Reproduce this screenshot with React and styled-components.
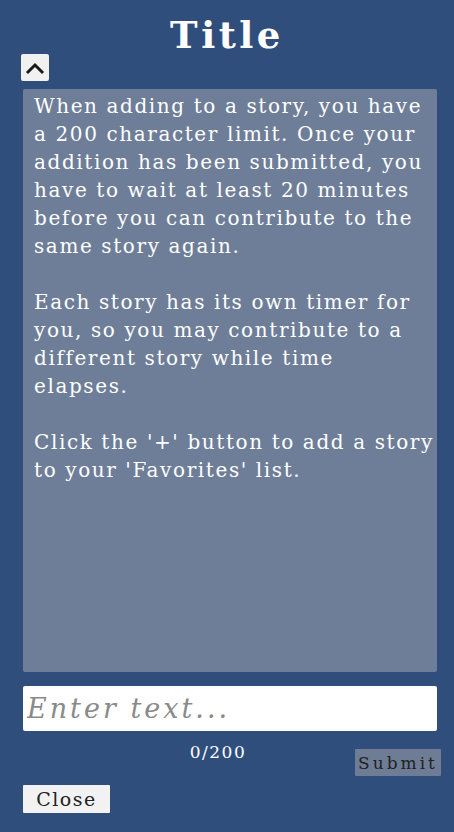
import React from 'react';
import styled, { createGlobalStyle } from 'styled-components';

const GlobalStyle = createGlobalStyle`
  html, body {
    margin: 0;
    padding: 0;
    background: #304e7c;
  }
  body {
    font-family: 'DejaVu Serif', 'Liberation Serif', serif;
  }
`;

const Page = styled.div`
  width: 454px;
  height: 832px;
  box-sizing: border-box;
  padding: 0 15px 0 23px;
  display: flex;
  flex-direction: column;
  background: #304e7c;
  overflow: hidden;
`;

const Title = styled.h1`
  margin: 13px 0 0 -8px;
  height: 41px;
  line-height: 44px;
  text-align: center;
  color: #ffffff;
  font-size: 37px;
  font-weight: bold;
  letter-spacing: 3.5px;
`;

const CollapseButton = styled.button`
  width: 28px;
  height: 27px;
  margin: 0 0 8px -2px;
  padding: 0;
  border: none;
  border-radius: 2px;
  background: #f1f1f1;
  display: flex;
  align-items: center;
  justify-content: center;
`;

const Panel = styled.div`
  width: 414px;
  height: 583px;
  box-sizing: border-box;
  padding: 3px 4px 0 11px;
  background: #6e7e98;
  border-radius: 2px;
  color: #ffffff;
  font-size: 20px;
  line-height: 28px;
  letter-spacing: 1.6px;
`;

const Paragraph = styled.p`
  margin: 0 0 28px;
`;

const Line = styled.span`
  display: block;
  white-space: nowrap;
`;

const TextInput = styled.input`
  margin-top: 14px;
  width: 414px;
  height: 45px;
  box-sizing: border-box;
  padding: 0 4px;
  border: none;
  border-radius: 2px;
  background: #ffffff;
  font-family: 'DejaVu Serif', serif;
  font-style: italic;
  font-size: 27px;
  letter-spacing: 3px;
  color: #333;
  outline: none;

  &::placeholder {
    color: #8a8a8a;
  }
`;

const CountRow = styled.div`
  display: grid;
  grid-template-columns: 1fr auto;
  align-items: start;
  margin-top: 10px;
  margin-right: -2px;
`;

const Counter = styled.div`
  padding-left: 58px;
  text-align: center;
  color: #ffffff;
  font-size: 17px;
  line-height: 22px;
  letter-spacing: 1.5px;
`;

const Button = styled.button`
  height: ${p => p.$tall}px;
  width: ${p => p.$wide}px;
  margin-top: ${p => p.$top || 0}px;
  padding: 0;
  border: none;
  border-radius: 1px;
  background: ${p => p.$bg};
  color: #222;
  font-family: 'DejaVu Serif', serif;
  font-size: ${p => p.$size}px;
  letter-spacing: ${p => p.$spacing || 0}px;
`;

const Chevron = () => (
  <svg width="20" height="14" viewBox="0 0 20 14">
    <path d="M2 12 L10 4 L18 12" fill="none" stroke="#1a1a1a" strokeWidth="3" />
  </svg>
);

export default function App() {
  return (
    <>
      <GlobalStyle />
      <Page>
        <Title>Title</Title>
        <CollapseButton aria-label="collapse">
          <Chevron />
        </CollapseButton>
        <Panel>
          <Paragraph>
            <Line>When adding to a story, you have</Line>
            <Line>a 200 character limit.  Once your</Line>
            <Line>addition has been submitted, you</Line>
            <Line>have to wait at least 20 minutes</Line>
            <Line>before you can contribute to the</Line>
            <Line>same story again.</Line>
          </Paragraph>
          <Paragraph>
            <Line>Each story has its own timer for</Line>
            <Line>you, so you may contribute to a</Line>
            <Line>different story while time</Line>
            <Line>elapses.</Line>
          </Paragraph>
          <Paragraph>
            <Line>Click the '+' button to add a story</Line>
            <Line>to your 'Favorites' list.</Line>
          </Paragraph>
        </Panel>
        <TextInput placeholder="Enter text..." />
        <CountRow>
          <Counter>0/200</Counter>
          <Button $tall={27} $wide={86} $top={8} $bg="#6e7d95" $size={17} $spacing={3}>
            Submit
          </Button>
        </CountRow>
        <Button $tall={28} $wide={87} $top={9} $bg="#f2f2f2" $size={19} $spacing={1.5}>
          Close
        </Button>
      </Page>
    </>
  );
}
